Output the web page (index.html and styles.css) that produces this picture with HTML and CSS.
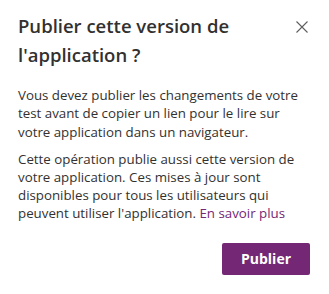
FILE: index.html
```html
<!DOCTYPE html>
<html lang="fr">
<head>
<meta charset="utf-8">
<link rel="stylesheet" href="styles.css">
</head>
<body>
<div class="dialog">
  <div class="header">
    <h1 class="title">Publier cette version de l'application ?</h1>
    <button class="close" aria-label="Fermer">
      <svg width="12" height="12" viewBox="0 0 12 12"><path d="M0.5 0.5L11.5 11.5M11.5 0.5L0.5 11.5" stroke="#605e5c" stroke-width="1.1" fill="none"/></svg>
    </button>
  </div>
  <div class="content">
    <p class="text">Vous devez publier les changements de votre test avant de copier un lien pour le lire sur votre application dans un navigateur.</p>
    <p class="text">Cette opération publie aussi cette version de votre application. Ces mises à jour sont disponibles pour tous les utilisateurs qui peuvent utiliser l'application. <a class="link" href="#">En savoir plus</a></p>
  </div>
  <div class="footer">
    <button class="primary">Publier</button>
  </div>
</div>
</body>
</html>
```
FILE: styles.css
```css
html, body {
  margin: 0;
  padding: 0;
  background: #ffffff;
}
body {
  font-family: "Open Sans", "Noto Sans", sans-serif;
  color: #323130;
}
.dialog {
  width: 329px;
  height: 294px;
  box-sizing: border-box;
  padding: 11px 14px 0 18px;
}
.header {
  display: flex;
  justify-content: space-between;
  align-items: flex-start;
}
.title {
  margin: 0;
  font-size: 18.5px;
  font-weight: 600;
  line-height: 29px;
  width: 260px;
  color: #323130;
}
.close {
  border: none;
  background: none;
  padding: 0;
  margin-top: 10px;
  margin-right: 7px;
  width: 12px;
  height: 12px;
  display: flex;
}
.content {
  margin-top: 17px;
}
.text {
  margin: 0 0 8.7px 0;
  font-size: 13.3px;
  line-height: 18.3px;
}
.link {
  color: #742774;
  text-decoration: none;
}
.footer {
  display: flex;
  justify-content: flex-end;
  margin-top: 20px;
}
.primary {
  width: 88px;
  height: 32px;
  border: none;
  border-radius: 2px;
  background: #742774;
  color: #ffffff;
  font-family: "Open Sans", "Noto Sans", sans-serif;
  font-size: 14px;
  font-weight: 700;
  margin-right: 5px;
}
```
